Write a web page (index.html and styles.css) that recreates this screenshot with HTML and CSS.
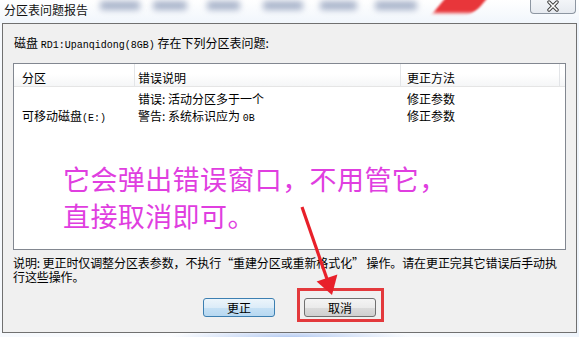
FILE: index.html
```html
<!DOCTYPE html>
<html lang="zh-CN">
<head>
<meta charset="utf-8">
<title>分区表问题报告</title>
<link rel="stylesheet" href="styles.css">
</head>
<body>
<div class="titlebar">
  <span class="title">分区表问题报告</span>
  <span class="blur b1"></span>
  <span class="blur b2"></span>
  <span class="blur b3"></span>
  <span class="blur b4"></span>
  <span class="blur b5"></span>
  <span class="blur b6"></span>
  <span class="swoosh"></span>
  <span class="close">
    <svg width="16" height="12" viewBox="0 0 16 12">
      <path d="M4 2 L12 10 M12 2 L4 10" stroke="#3a3a3a" stroke-width="3.4" stroke-linecap="round" fill="none"/>
      <path d="M4 2 L12 10 M12 2 L4 10" stroke="#ffffff" stroke-width="1.6" stroke-linecap="round" fill="none"/>
    </svg>
  </span>
</div>
<div class="window">
  <div class="summary">磁盘 <span class="mono">RD1:Upanqidong(8GB)</span> 存在下列分区表问题:</div>
  <div class="listbox">
    <div class="header">
      <div class="col c1">分区</div>
      <div class="col c2">错误说明</div>
      <div class="col c3">更正方法</div>
      <div class="col c4"></div>
    </div>
    <div class="row">
      <div class="col c1 cell-part">可移动磁盘<span class="mono">(E:)</span></div>
      <div class="col c2 cell">
        <div>错误:&nbsp;活动分区多于一个</div>
        <div>警告:&nbsp;系统标识应为 <span class="mono">0B</span></div>
      </div>
      <div class="col c3 cell">
        <div>修正参数</div>
        <div>修正参数</div>
      </div>
    </div>
  </div>
  <div class="note">
    <span class="line">说明: 更正时仅调整分区表参数，不执行“重建分区或重新格式化” 操作。请在更正完其它错误后手动执</span>
    <span class="line">行这些操作。</span>
  </div>
  <div class="buttons">
    <button class="btn primary">更正</button>
    <button class="btn">取消</button>
  </div>
  <div class="annotation">它会弹出错误窗口，不用管它，<br>直接取消即可。</div>
  <div class="highlight"></div>
</div>
<svg class="arrow" width="579" height="337" viewBox="0 0 579 337">
  <line x1="302" y1="207" x2="327" y2="279" stroke="#e8202a" stroke-width="3.2"/>
  <polygon points="332,295 316.6,281.6 337.4,274.4" fill="#e8202a"/>
</svg>
</body>
</html>
```
FILE: styles.css
```css
html, body {
  margin: 0;
  padding: 0;
}
body {
  width: 579px;
  height: 337px;
  overflow: hidden;
  position: relative;
  font-family: "Noto Sans CJK SC", "Noto Sans", sans-serif;
  font-size: 12px;
  color: #000;
  background:
    radial-gradient(ellipse 120px 8px at 290px 337px, rgba(120,160,230,0.55), rgba(120,160,230,0) 100%),
    linear-gradient(to right, #f6f9fd 0, #ffffff 50%, #eef4fb 100%);
}
.titlebar {
  height: 23px;
  position: relative;
  display: flex;
  align-items: flex-start;
  padding-left: 4px;
  box-sizing: border-box;
  background: linear-gradient(#ffffff, #f1f6fc);
}
.title {
  padding-top: 2px;
  line-height: 16px;
  font-size: 12px;
  color: #111;
}
.blur {
  position: absolute;
  top: 1px;
  height: 9px;
  background: rgba(100,120,160,0.55);
  filter: blur(3px);
  border-radius: 3px;
}
.b1 { left: 100px; width: 40px; }
.b2 { left: 153px; width: 34px; }
.b3 { left: 207px; width: 33px; }
.b4 { left: 263px; width: 40px; }
.b5 { left: 320px; width: 37px; }
.b6 { left: 375px; width: 42px; }
.swoosh {
  position: absolute;
  left: 440px;
  top: -4px;
  width: 42px;
  height: 17px;
  background: #e8363a;
  transform: skewX(-40deg);
  filter: blur(1.5px);
  border-radius: 3px 0 6px 3px;
}
.close {
  position: absolute;
  left: 530px;
  top: -1px;
  width: 46px;
  height: 15px;
  box-sizing: border-box;
  border: 1px solid #8d96a2;
  border-top: none;
  border-radius: 0 0 4px 4px;
  background: linear-gradient(#f4f6f9, #e6eaf0);
  display: flex;
  align-items: center;
  justify-content: center;
}
.window {
  position: relative;
  margin-left: 2px;
  width: 575px;
  height: 310px;
  box-sizing: border-box;
  border: 1px solid #707070;
  background: #f0f0f0;
  padding: 0 10px;
  display: flex;
  flex-direction: column;
}
.mono {
  font-family: "Liberation Mono", "DejaVu Sans Mono", monospace;
  font-size: 10px;
}
.summary {
  margin-top: 11px;
  margin-left: 1px;
  line-height: 16px;
  white-space: nowrap;
}
.listbox {
  margin-top: 9px;
  height: 187px;
  box-sizing: border-box;
  border: 1px solid #828790;
  background: #fff;
  display: flex;
  flex-direction: column;
}
.header {
  height: 23px;
  box-sizing: border-box;
  border-bottom: 1px solid #e5e5e5;
  background: linear-gradient(#ffffff 0%, #ffffff 45%, #f5f6f7 100%);
  display: flex;
}
.header .col {
  padding-top: 6px;
  line-height: 16px;
  box-sizing: border-box;
  border-right: 1px solid #e3e5e8;
}
.col.c1 { width: 121px; padding-left: 8px; box-sizing: border-box; }
.col.c2 { width: 266px; padding-left: 3px; box-sizing: border-box; }
.col.c3 { width: 159px; padding-left: 6px; box-sizing: border-box; }
.col.c4 { flex: 1; border-right: none; }
.row {
  display: flex;
  padding-top: 3px;
  line-height: 17px;
}
.cell-part {
  padding-top: 17px;
}
.note {
  margin-top: 6px;
  display: flex;
  flex-direction: column;
  line-height: 14px;
  font-size: 12px;
}
.note .line {
  white-space: nowrap;
  letter-spacing: -0.1px;
}
.buttons {
  margin-top: 14px;
  display: flex;
  justify-content: center;
  gap: 29px;
}
.btn {
  width: 72px;
  height: 19px;
  box-sizing: border-box;
  padding: 0;
  margin: 0;
  font-family: "Noto Sans CJK SC", sans-serif;
  font-size: 12px;
  line-height: 16px;
  color: #000;
  border: 1px solid #707070;
  border-radius: 3px;
  background: linear-gradient(#f4f4f4 0%, #ebebeb 50%, #dcdcdc 51%, #cfcfcf 100%);
}
.btn.primary {
  border-color: #3c7fb1;
  background: linear-gradient(#ecf5fb 0%, #dcecf8 50%, #c6e1f5 51%, #b7d8f1 100%);
}
.annotation {
  position: absolute;
  left: 60px;
  top: 136px;
  font-size: 27px;
  line-height: 37px;
  letter-spacing: 0.4px;
  color: #e03ee0;
  white-space: nowrap;
}
.highlight {
  position: absolute;
  left: 294px;
  top: 264px;
  width: 87px;
  height: 34px;
  box-sizing: border-box;
  border: 3px solid #e3393c;
}
.arrow {
  position: absolute;
  left: 0;
  top: 0;
  pointer-events: none;
}
```
